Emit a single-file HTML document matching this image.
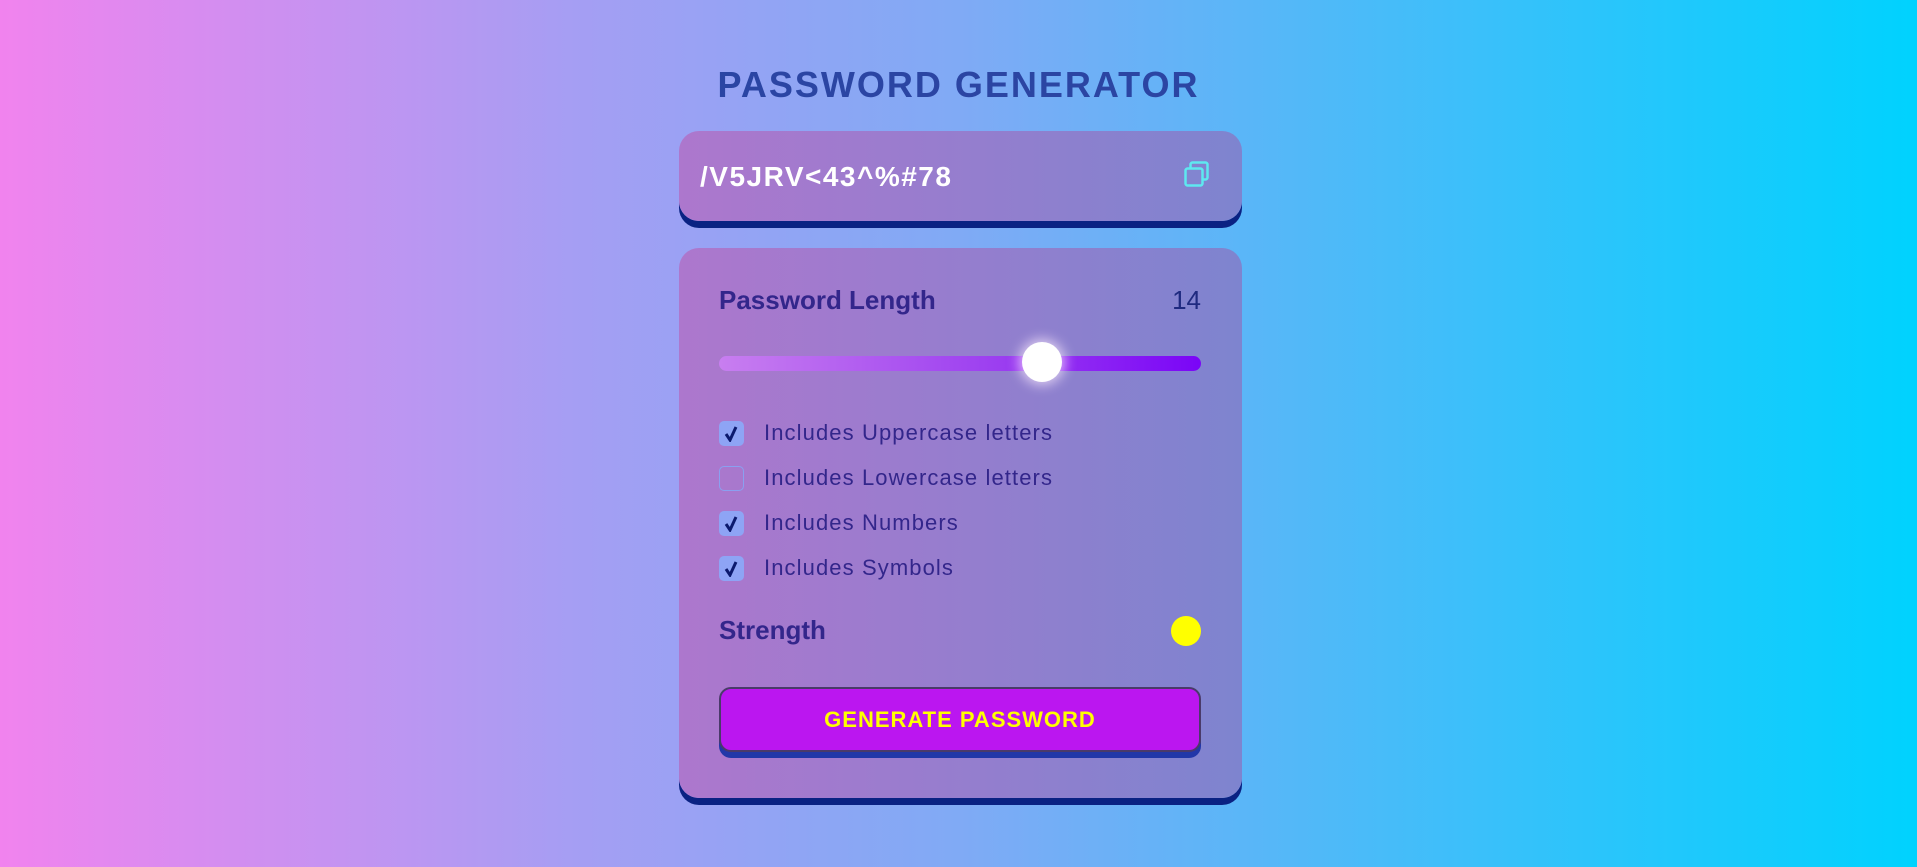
<!DOCTYPE html>
<html><head><meta charset="utf-8"><style>
*{margin:0;padding:0;box-sizing:border-box}
html,body{width:1917px;height:867px;overflow:hidden}
body{background:linear-gradient(to right,#f183ee 0%,#a59ef3 30%,#80aaf5 50%,#00d2fe 100%);font-family:"Liberation Sans",sans-serif;position:relative}
.abs{position:absolute}
.title{left:0;width:1917px;top:64px;text-align:center;font-size:36px;font-weight:bold;letter-spacing:2px;color:#2b45a3}
.card{background:linear-gradient(to right,#ad77cd,#7e84cf);border-radius:20px;box-shadow:0 7px 0 #0a2283}
.lbl{color:#33268b;font-size:26px;font-weight:bold}
.cb{left:719px;width:25px;height:25px;border-radius:5px;background:#8ea4f5}
.cb.off{background:transparent;border:1.5px solid #8aa0f0}
.cb svg{position:absolute;left:4px;top:4px}
.opt{left:764px;font-size:22px;color:#33268b;letter-spacing:1.1px}
</style></head><body>
<div class="abs title">PASSWORD GENERATOR</div>
<div class="abs card" style="left:679px;top:131px;width:563px;height:90px"></div>
<div class="abs" style="left:700px;top:161px;font-size:28px;font-weight:bold;color:#fff;letter-spacing:1.5px">/V5JRV&lt;43^%#78</div>
<svg class="abs" style="left:1183px;top:160px" width="28" height="28" viewBox="0 0 28 28"><rect x="7.5" y="2.5" width="17" height="17" rx="2" fill="none" stroke="#5ee8f0" stroke-width="2.5"/><rect x="2.5" y="8.5" width="17" height="17" rx="2" fill="#8285d0" stroke="#5ee8f0" stroke-width="2.5"/></svg>
<div class="abs card" style="left:679px;top:248px;width:563px;height:550px"></div>
<div class="abs lbl" style="left:719px;top:285px">Password Length</div>
<div class="abs" style="left:1160px;top:285px;width:41px;text-align:right;font-size:26px;color:#1f2a80">14</div>
<div class="abs" style="left:719px;top:356px;width:482px;height:15px;border-radius:8px;background:linear-gradient(to right,#c87ef0,#9a3cf0 60%,#7a05f7)"></div>
<div class="abs" style="left:1022px;top:342px;width:40px;height:40px;border-radius:50%;background:#fff;box-shadow:0 0 12px 3px rgba(255,240,255,.7)"></div>
<div class="abs cb" style="top:421px"><svg width="17" height="17" viewBox="0 0 17 17"><path d="M3 9 L7 15 L13 2" fill="none" stroke="#0c1a6e" stroke-width="3"/></svg></div>
<div class="abs opt" style="top:420px">Includes Uppercase letters</div>
<div class="abs cb off" style="top:466px"></div>
<div class="abs opt" style="top:465px">Includes Lowercase letters</div>
<div class="abs cb" style="top:511px"><svg width="17" height="17" viewBox="0 0 17 17"><path d="M3 9 L7 15 L13 2" fill="none" stroke="#0c1a6e" stroke-width="3"/></svg></div>
<div class="abs opt" style="top:510px">Includes Numbers</div>
<div class="abs cb" style="top:556px"><svg width="17" height="17" viewBox="0 0 17 17"><path d="M3 9 L7 15 L13 2" fill="none" stroke="#0c1a6e" stroke-width="3"/></svg></div>
<div class="abs opt" style="top:555px">Includes Symbols</div>
<div class="abs lbl" style="left:719px;top:615px">Strength</div>
<div class="abs" style="left:1171px;top:616px;width:30px;height:30px;border-radius:50%;background:#ffff00"></div>
<div class="abs" style="left:719px;top:687px;width:482px;height:65px;border-radius:12px;background:#bb16f0;border:2px solid #4a3a6a;box-shadow:0 6px 0 #2237a8;color:#ffff00;font-size:22px;font-weight:bold;letter-spacing:1px;text-align:center;line-height:61px">GENERATE PASSWORD</div>
</body></html>
